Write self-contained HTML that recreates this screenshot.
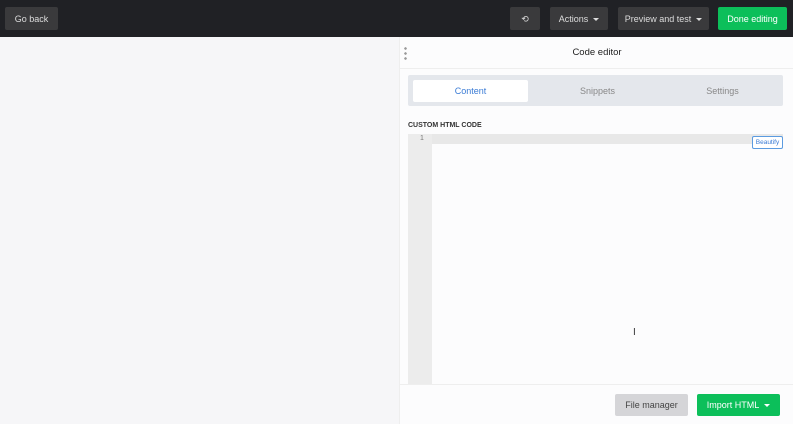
<!DOCTYPE html>
<html><head><style>
*{box-sizing:border-box;margin:0;padding:0}
body{width:793px;height:424px;overflow:hidden;font-family:"Liberation Sans",sans-serif;background:#f6f6f8;position:relative}
.top{position:absolute;left:0;top:0;width:793px;height:37px;background:#202125}
.btn{position:absolute;top:7px;height:23px;background:#3a3a3c;color:#ddd;font-size:9px;line-height:24px;text-align:center;border-radius:2px}
.car{display:inline-block;border-left:3px solid transparent;border-right:3px solid transparent;border-top:3px solid #ddd;vertical-align:middle;margin-left:5px}
.panel{position:absolute;left:399px;top:37px;width:394px;height:387px;background:#fcfcfd;border-left:1px solid #eee}
.abs{position:absolute}
</style></head><body>
<div class="top">
<div class="btn" style="left:5px;width:53px">Go back</div>
<div class="btn" style="left:510px;width:30px">⟲</div>
<div class="btn" style="left:550px;width:58px">Actions<span class="car"></span></div>
<div class="btn" style="left:618px;width:91px">Preview and test<span class="car"></span></div>
<div class="btn" style="left:718px;width:69px;background:#0cbf5a;color:#fff">Done editing</div>
</div>
<div class="panel">
<div class="abs" style="left:4px;top:9px;width:3px;height:14px;background:radial-gradient(circle,#999 1.2px,transparent 1.4px) 0 0/3px 5px"></div>
<div class="abs" style="left:0;top:10px;width:394px;text-align:center;font-size:9.5px;color:#222">Code editor</div>
<div class="abs" style="left:0;top:31px;width:394px;height:1px;background:#eee"></div>
<div class="abs" style="left:8px;top:38px;width:375px;height:31px;background:#e4e7ec;border-radius:2px"></div>
<div class="abs" style="left:13px;top:43px;width:115px;height:22px;background:#fff;border-radius:2px;color:#3a7bd5;font-size:9px;line-height:23px;text-align:center">Content</div>
<div class="abs" style="left:140px;top:43px;width:115px;line-height:23px;color:#888;font-size:9px;text-align:center">Snippets</div>
<div class="abs" style="left:265px;top:43px;width:115px;line-height:23px;color:#888;font-size:9px;text-align:center">Settings</div>
<div class="abs" style="left:8px;top:85px;font-size:7px;font-weight:bold;color:#333">CUSTOM HTML CODE</div>
<div class="abs" style="left:8px;top:97px;width:375px;height:10px;background:#e8e8e8"></div>
<div class="abs" style="left:8px;top:97px;width:24px;height:250px;background:#ececec"></div>
<div class="abs" style="left:20px;top:98px;font-size:7px;color:#777">1</div>
<div class="abs" style="left:352px;top:99px;width:31px;height:13px;border:1px solid #5b9be0;border-radius:2px;background:#fff;color:#3a7bd5;font-size:6.5px;line-height:11px;text-align:center">Beautify</div>
<div class="abs" style="left:233px;top:290px;font-size:10px;color:#333">I</div>
<div class="abs" style="left:0;top:347px;width:394px;height:1px;background:#eee"></div>
<div class="abs" style="left:215px;top:357px;width:73px;height:22px;background:#d5d5d8;border-radius:2px;color:#444;font-size:9px;line-height:23px;text-align:center">File manager</div>
<div class="abs" style="left:297px;top:357px;width:83px;height:22px;background:#0cbf5a;border-radius:2px;color:#fff;font-size:9px;line-height:23px;text-align:center">Import HTML<span class="car" style="border-top-color:#fff"></span></div>
</div>
</body></html>
